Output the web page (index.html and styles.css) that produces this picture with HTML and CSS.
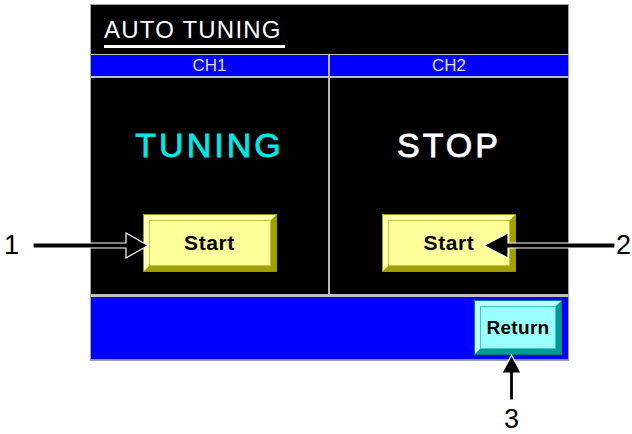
FILE: index.html
```html
<!DOCTYPE html>
<html lang="en">
<head>
    <meta charset="UTF-8">
    <meta name="viewport" content="width=device-width, initial-scale=1.0">
    <title>Auto Tuning</title>
    <link rel="stylesheet" href="styles.css">
</head>
<body>
    <div class="page">
        <!-- panel screen -->
        <div class="screen">
            <div class="title"><span class="title-text">AUTO TUNING</span></div>

            <div class="channels">
                <div class="channel">
                    <div class="ch-head">CH1</div>
                    <div class="ch-body">
                        <div class="status tuning">TUNING</div>
                        <button type="button" class="btn btn-start">Start</button>
                    </div>
                </div>
                <div class="channel">
                    <div class="ch-head">CH2</div>
                    <div class="ch-body">
                        <div class="status stop">STOP</div>
                        <button type="button" class="btn btn-start">Start</button>
                    </div>
                </div>
            </div>

            <div class="footer">
                <button type="button" class="btn btn-return">Return</button>
            </div>
        </div>

        <!-- callout arrows -->
        <svg class="callouts" width="632" height="434" viewBox="0 0 632 434">
            <polygon class="arrow" points="33,243 126,243 126,233 148,245.5 126,258 126,248 33,248"/>
            <polygon class="arrow" points="615,243 508,243 508,233 484,245.5 508,258 508,248 615,248"/>
            <polygon class="arrow" points="509.5,400 509.5,373 502,373 511.5,355 521,373 513.5,373 513.5,400"/>
            <text class="num" x="4" y="254">1</text>
            <text class="num" x="616" y="254">2</text>
            <text class="num" x="511.5" y="428" text-anchor="middle">3</text>
        </svg>
    </div>
</body>
</html>
```

FILE: styles.css
```css
body {
    margin: 0;
    background-color: #fff;
    font-family: "Liberation Sans", Arial, sans-serif;
}
.page {
    position: relative;
    width: 632px;
    height: 434px;
    padding-top: 4px;
    box-sizing: border-box;
}
.screen {
    width: 477px;
    margin-left: 90px;
    border: 1px solid #a0a0a0;
    background-color: #000;
}
.title {
    height: 50px;
    box-sizing: border-box;
    padding: 11px 0 0 13px;
    border-bottom: 1px solid #c0c0c0;
}
.title-text {
    display: inline-block;
    color: #fff;
    font-size: 24px;
    line-height: 28px;
    letter-spacing: 1.2px;
    padding: 0 3px 1px 0;
    border-bottom: 3px solid #fff;
}
.channels {
    display: grid;
    grid-template-columns: 237px 238px;
    column-gap: 2px;
    background-color: #b8b8b8;
}
.channel {
    background-color: #000;
}
.ch-head {
    height: 21px;
    line-height: 21px;
    background-color: #0000ff;
    color: #e0e0ff;
    font-size: 17px;
    text-align: center;
    border-bottom: 2px solid #b8b8e0;
}
.ch-body {
    height: 216px;
    box-sizing: border-box;
    padding-top: 47px;
    display: flex;
    flex-direction: column;
    align-items: center;
}
.status {
    font-size: 34px;
    line-height: 40px;
    letter-spacing: 3px;
    margin-bottom: 50px;
    -webkit-text-stroke: 0.8px currentColor;
}
.tuning {
    color: #00e8e8;
}
.stop {
    color: #fff;
}
.btn {
    box-sizing: border-box;
    border-width: 5px;
    border-style: solid;
    font-family: "Liberation Sans", Arial, sans-serif;
    font-weight: bold;
    color: #000;
    padding: 0;
    cursor: pointer;
}
.btn-start {
    width: 132px;
    height: 56px;
    font-size: 21px;
    letter-spacing: 0.6px;
    background-color: #ffff99;
    border-color: #ffffb8 #a0a000 #a0a000 #ffffb8;
    box-shadow: 0 0 0 1px #9a9a00, inset 0 0 0 1px #c8c840;
}
.footer {
    height: 63px;
    box-sizing: border-box;
    margin-top: 3px;
    background-color: #0000ff;
    display: flex;
    justify-content: flex-end;
    align-items: flex-start;
    padding: 4px 7px 0 0;
    border-bottom: 1px solid #8080ff;
    box-shadow: 0 -3px 0 #c0c0c0;
}
.btn-return {
    width: 86px;
    height: 53px;
    font-size: 19px;
    letter-spacing: 0.3px;
    background-color: #99ffff;
    border-color: #c0ffff #009a9a #009a9a #c0ffff;
    box-shadow: 0 0 0 1px #008080, inset 0 0 0 1px #40c8c8;
}
.callouts {
    position: absolute;
    left: 0;
    top: 0;
    pointer-events: none;
}
.arrow {
    fill: #000;
    stroke: #fff;
    stroke-width: 1.2;
}
.num {
    font-family: "Liberation Sans", Arial, sans-serif;
    font-size: 27px;
    fill: #000;
}
```
